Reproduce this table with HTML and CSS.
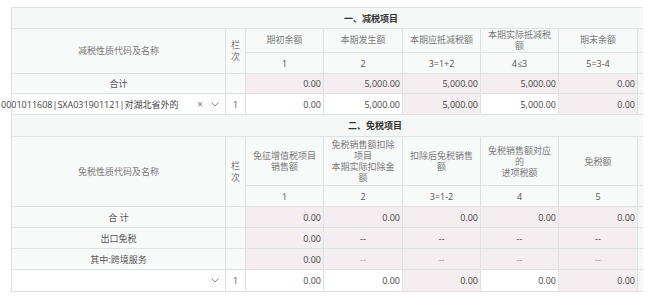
FILE: index.html
```html
<!DOCTYPE html>
<html lang="zh-CN">
<head>
<meta charset="utf-8">
<link rel="stylesheet" href="styles.css">
</head>
<body>
<table class="grid">
  <colgroup>
    <col class="c-name"><col class="c-no"><col class="c-a"><col class="c-b"><col class="c-a"><col class="c-a"><col class="c-b"><col class="c-x">
  </colgroup>
  <tbody>
    <tr class="r-title"><td colspan="8" class="title t1">一、减税项目</td></tr>
    <tr class="r-h1">
      <td rowspan="2" class="hd">减税性质代码及名称</td>
      <td rowspan="2" class="hd no">栏<br>次</td>
      <td class="hd">期初余额</td>
      <td class="hd">本期发生额</td>
      <td class="hd">本期应抵减税额</td>
      <td class="hd">本期实际抵减税额</td>
      <td class="hd">期末余额</td>
      <td class="ex"></td>
    </tr>
    <tr class="r-row">
      <td class="hd num">1</td>
      <td class="hd num">2</td>
      <td class="hd num">3=1+2</td>
      <td class="hd num">4≤3</td>
      <td class="hd num">5=3-4</td>
      <td class="ex"></td>
    </tr>
    <tr class="r-sum sep">
      <td class="hd lbl">合计</td>
      <td class="hd"></td>
      <td class="ro v">0.00</td>
      <td class="ro v">5,000.00</td>
      <td class="ro v">5,000.00</td>
      <td class="ro v">5,000.00</td>
      <td class="ro v">0.00</td>
      <td class="ex"></td>
    </tr>
    <tr class="r-row">
      <td class="sel-cell">
        <div class="sel">
          <span class="sel-text">0001011608|SXA031901121|对湖北省外的</span>
          <span class="clr">×</span>
          <svg class="chev" width="8" height="5" viewBox="0 0 8 5"><path d="M0.5 0.5 L4 4 L7.5 0.5" fill="none" stroke="#888" stroke-width="1"/></svg>
        </div>
      </td>
      <td class="idx">1</td>
      <td class="v">0.00</td>
      <td class="v">5,000.00</td>
      <td class="ro v">5,000.00</td>
      <td class="v">5,000.00</td>
      <td class="ro v">0.00</td>
      <td class="ex"></td>
    </tr>
    <tr class="r-title2 sep"><td colspan="8" class="title t2">二、免税项目</td></tr>
    <tr class="r-h2">
      <td rowspan="2" class="hd">免税性质代码及名称</td>
      <td rowspan="2" class="hd no">栏<br>次</td>
      <td class="hd">免征增值税项目销售额</td>
      <td class="hd">免税销售额扣除项目<br>本期实际扣除金额</td>
      <td class="hd">扣除后免税销售额</td>
      <td class="hd">免税销售额对应的<br>进项税额</td>
      <td class="hd">免税额</td>
      <td class="ex"></td>
    </tr>
    <tr class="r-row">
      <td class="hd num">1</td>
      <td class="hd num">2</td>
      <td class="hd num">3=1-2</td>
      <td class="hd num">4</td>
      <td class="hd num">5</td>
      <td class="ex"></td>
    </tr>
    <tr class="r-row sep">
      <td class="hd lbl">合 计</td>
      <td class="hd"></td>
      <td class="ro v">0.00</td>
      <td class="ro v">0.00</td>
      <td class="ro v">0.00</td>
      <td class="ro v">0.00</td>
      <td class="ro v">0.00</td>
      <td class="ex"></td>
    </tr>
    <tr class="r-row">
      <td class="hd lbl">出口免税</td>
      <td class="hd"></td>
      <td class="ro v">0.00</td>
      <td class="ro dash">--</td>
      <td class="ro dash">--</td>
      <td class="ro dash">--</td>
      <td class="ro dash">--</td>
      <td class="ex"></td>
    </tr>
    <tr class="r-row">
      <td class="hd lbl">其中:跨境服务</td>
      <td class="hd"></td>
      <td class="ro v">0.00</td>
      <td class="ro dash light">--</td>
      <td class="ro dash light">--</td>
      <td class="ro dash light">--</td>
      <td class="ro dash light">--</td>
      <td class="ex"></td>
    </tr>
    <tr class="r-last sep">
      <td class="sel-cell">
        <div class="sel sel-empty">
          <svg class="chev" width="8" height="5" viewBox="0 0 8 5"><path d="M0.5 0.5 L4 4 L7.5 0.5" fill="none" stroke="#888" stroke-width="1"/></svg>
        </div>
      </td>
      <td class="idx">1</td>
      <td class="v">0.00</td>
      <td class="v">0.00</td>
      <td class="ro v">0.00</td>
      <td class="v">0.00</td>
      <td class="ro v">0.00</td>
      <td class="ex"></td>
    </tr>
  </tbody>
</table>
</body>
</html>
```

FILE: styles.css
```css
html, body {
  margin: 0;
  padding: 0;
  background: #fff;
}
body {
  font-family: "Open Sans", "Noto Sans CJK SC", sans-serif;
  font-size: 9px;
  color: #555;
}
.grid {
  margin: 7px 0 0 11px;
  border-collapse: collapse;
  table-layout: fixed;
  width: 631px;
}
.c-name { width: 214px; }
.c-no { width: 20px; }
.c-a { width: 78px; }
.c-b { width: 79px; }
.c-x { width: 5px; }

.grid td {
  border: 1px solid #e0e2e2;
  padding: 0 4px;
  line-height: 11px;
  text-align: center;
  vertical-align: middle;
  white-space: normal;
  overflow: visible;
}
.r-title td { height: 20px; }
.r-title2 td { height: 21px; }
.r-h1 td { height: 23px; line-height: 10.5px; }
.r-h2 td { height: 48px; line-height: 11px; }
.r-row td { height: 20px; }
.r-sum td { height: 19px; }
.r-last td { height: 21px; }

.title {
  background: #f6f7f7;
  text-align: left !important;
  font-weight: 600;
  color: #333;
  border-right: none !important;
}
.t1 { padding-left: 332px !important; }
.t2 { padding-left: 336px !important; }

.hd {
  background: #f8f9f9;
  color: #7a7a7a;
}
.hd.num { color: #555; }
.hd.lbl { color: #555; font-weight: normal; }
.grid td.no { padding: 0; line-height: 12px; }

.sep td { border-top-color: #cfd1d1; }

.ro { background: #f4eef0; }
.grid td.v {
  text-align: right;
  padding: 0 2px 0 4px;
  color: #444;
}
.dash { color: #333; }
.dash.light { color: #999; }
.grid td.idx { color: #555; padding: 0; }

.grid td.ex {
  background: #f5f6f6;
  padding: 0;
  border-right: none;
}

.grid td.sel-cell { padding: 0; background: #fff; }
.sel {
  display: flex;
  align-items: center;
  margin-left: -11px;
  padding-right: 6px;
  color: #444;
}
.sel-empty { justify-content: flex-end; }
.sel-text {
  flex: 1;
  white-space: nowrap;
  overflow: hidden;
  text-align: left;
}
.clr {
  color: #777;
  font-size: 10px;
  margin: 0 8px 0 6px;
}
.chev { display: block; }
```
